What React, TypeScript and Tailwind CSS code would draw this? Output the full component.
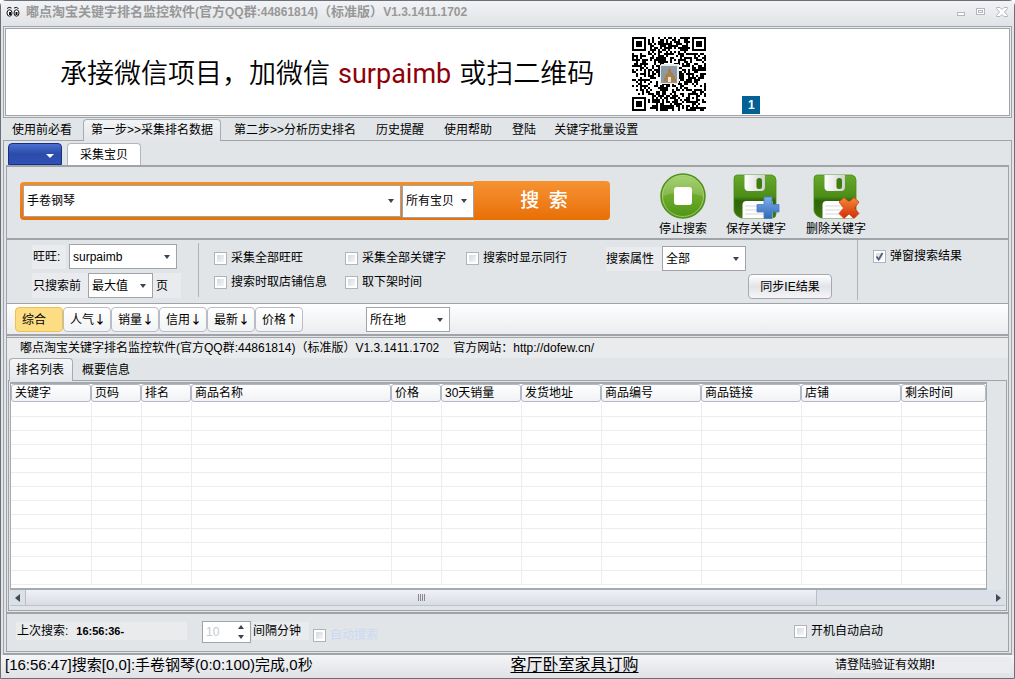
import { useState } from "react";

const menuTabs = [
  "使用前必看",
  "第一步>>采集排名数据",
  "第二步>>分析历史排名",
  "历史提醒",
  "使用帮助",
  "登陆",
  "关键字批量设置",
];

const sortTabs = [
  { name: "综合", arrow: "" },
  { name: "人气", arrow: "↓" },
  { name: "销量", arrow: "↓" },
  { name: "信用", arrow: "↓" },
  { name: "最新", arrow: "↓" },
  { name: "价格", arrow: "↑" },
];

const columns = [
  { name: "关键字", width: "w-[80px]" },
  { name: "页码", width: "w-[50px]" },
  { name: "排名", width: "w-[50px]" },
  { name: "商品名称", width: "w-[200px]" },
  { name: "价格", width: "w-[50px]" },
  { name: "30天销量", width: "w-[80px]" },
  { name: "发货地址", width: "w-[80px]" },
  { name: "商品编号", width: "w-[100px]" },
  { name: "商品链接", width: "w-[100px]" },
  { name: "店铺", width: "w-[100px]" },
  { name: "剩余时间", width: "" },
];

const QR_SIZE = 37;

function isFinder(x: number, y: number) {
  const corners = [
    [0, 0],
    [QR_SIZE - 7, 0],
    [0, QR_SIZE - 7],
  ];
  for (const [cx, cy] of corners) {
    const dx = x - cx;
    const dy = y - cy;
    if (dx >= -1 && dx <= 7 && dy >= -1 && dy <= 7) {
      const ring = Math.max(Math.abs(dx - 3), Math.abs(dy - 3));
      return ring === 3 || ring <= 1 ? 1 : 0;
    }
  }
  const ring = Math.max(Math.abs(x - 30), Math.abs(y - 30));
  if (ring <= 2) return ring === 1 ? 0 : 1;
  return -1;
}

function noise(n: number) {
  let h = Math.imul(n ^ 0x9e3779b9, 0x85ebca6b);
  h = Math.imul(h ^ (h >>> 13), 0xc2b2ae35);
  return ((h ^ (h >>> 16)) >>> 0) / 4294967296;
}

function qrPath() {
  let d = "";
  for (let y = 0; y < QR_SIZE; y++) {
    for (let x = 0; x < QR_SIZE; x++) {
      const fixed = isFinder(x, y);
      const dark = fixed === -1 ? noise(y * QR_SIZE + x + 1) > 0.48 : fixed === 1;
      if (dark) d += `M${x} ${y}h1v1h-1z`;
    }
  }
  return d;
}

function QrCode() {
  return (
    <svg viewBox="0 0 37 37" className="h-[74px] w-[74px]" shapeRendering="crispEdges" aria-label="二维码">
      <path d={qrPath()} fill="#000" />
      <rect x="14" y="13.500" width="9.500" height="10" rx="1" fill="#e9ece9" />
      <rect x="14.500" y="14.500" width="8" height="8.500" fill="#8c9aa6" />
      <path d="M16 22.500c0-3 1-4 2-5v-1.500c1-1 2 0 1.500 1.500 1.500 1 2.500 3 2.500 5z" fill="#a9814e" />
      <path d="M18 20h1.500v2.500h-1.500z" fill="#eee2cf" />
    </svg>
  );
}

function EyesIcon() {
  return (
    <svg viewBox="0 0 14 12" className="h-3 w-[14px]">
      <g fill="#fff" stroke="#111" strokeWidth="1">
        <ellipse cx="3.500" cy="7" rx="2.500" ry="3.200" />
        <ellipse cx="10.500" cy="7" rx="2.500" ry="3.200" />
      </g>
      <path d="M3 6h2v3h-2zM9.500 6h2v3h-2z" fill="#111" />
      <path d="M1 2.500q2-2 4.500-.5M8 2q2.500-1.500 4.500.5" fill="none" stroke="#111" />
    </svg>
  );
}

function StopIcon() {
  return (
    <svg viewBox="0 0 46 46" className="h-[46px] w-[46px]">
      <defs>
        <linearGradient id="stop-fill" x1="0" y1="0" x2="0" y2="1">
          <stop offset="0" stopColor="#9ccd62" />
          <stop offset="0.5" stopColor="#6eab2b" />
          <stop offset="1" stopColor="#4e9417" />
        </linearGradient>
      </defs>
      <circle cx="23" cy="23" r="22" fill="url(#stop-fill)" stroke="#529020" strokeWidth="1.500" />
      <circle cx="23" cy="23" r="20.500" fill="none" stroke="#b5db86" strokeOpacity="0.7" />
      <path d="M2.500 24a20.500 20.500 0 0 1 41 0c-8-5-30-7-41 0z" fill="#fff" fillOpacity="0.15" />
      <rect x="14" y="14" width="18" height="18" rx="3" fill="#fff" />
    </svg>
  );
}

function DiskIcon({ kind }: { kind: "add" | "remove" }) {
  return (
    <svg viewBox="0 0 48 46" className="h-[46px] w-12">
      <defs>
        <linearGradient id={`disk-${kind}`} x1="0" y1="0" x2="0" y2="1">
          <stop offset="0" stopColor="#67a92b" />
          <stop offset="0.5" stopColor="#4c8d18" />
          <stop offset="0.6" stopColor="#2e6508" />
          <stop offset="1" stopColor="#3c760e" />
        </linearGradient>
        <linearGradient id={`slide-${kind}`} x1="0" y1="0" x2="1" y2="0">
          <stop offset="0" stopColor="#fff" />
          <stop offset="1" stopColor="#cfd2cf" />
        </linearGradient>
        <linearGradient id="plus-fill" x1="0" y1="0" x2="0" y2="1">
          <stop offset="0" stopColor="#7fb0ea" />
          <stop offset="1" stopColor="#2f68b8" />
        </linearGradient>
        <linearGradient id="cross-fill" x1="0" y1="0" x2="0" y2="1">
          <stop offset="0" stopColor="#f58a3c" />
          <stop offset="1" stopColor="#d02d06" />
        </linearGradient>
      </defs>
      <path
        d="M5 2h35q4 1 4 5v34q0 4-4 4H9Q2 42 2 37V6q0-4 3-4z"
        fill={`url(#disk-${kind})`}
        stroke="#4b8c17"
        strokeWidth="0.800"
      />
      <path d="M12.500 2h20.500v12q0 4-4 4h-12.500q-4 0-4-4z" fill={`url(#slide-${kind})`} />
      <rect x="24.500" y="5" width="5.500" height="11" rx="2.500" fill="#3e7b11" />
      <path d="M10.500 45V32q0-4 4-4h26v17z" fill="#fff" />
      <path d="M13 33h20M13 37h20M13 41h20" stroke="#d5d8d5" />
      {kind === "add" ? (
        <path
          d="M32 24h8v7.500h7v7.500h-7v6.500h-8v-6.500h-7v-7.500h7z"
          fill="url(#plus-fill)"
          stroke="#4a7cc3"
          strokeWidth="0.800"
        />
      ) : (
        <path
          d="M32 24.500l5 4.500 5-4.500 5 4.500-4.500 6 4.500 5.500-5 5-5-4.500-5 4.500-5-5 4.500-5.500-4.500-6z"
          fill="url(#cross-fill)"
          stroke="#d8420f"
          strokeWidth="0.800"
        />
      )}
    </svg>
  );
}

function Combo({ label, options, className }: { label: string; options: string[]; className: string }) {
  return (
    <div className={`relative shrink-0 border border-[#a0a3aa] bg-white ${className}`}>
      <select aria-label={label} className="h-full w-full appearance-none bg-transparent pr-5 pl-[3px] outline-none">
        {options.map((option) => (
          <option key={option}>{option}</option>
        ))}
      </select>
      <svg viewBox="0 0 6 4" className="pointer-events-none absolute top-1/2 right-[6px] -mt-[2px] h-1 w-[6px]">
        <path d="M0 0h6L3 4z" fill="#3a4350" />
      </svg>
    </div>
  );
}

function Check({ label, checked = false, disabled = false }: { label: string; checked?: boolean; disabled?: boolean }) {
  const [on, setOn] = useState(checked);
  return (
    <label className={`flex h-4 items-center gap-1 whitespace-nowrap ${disabled ? "text-[#cbd9f3]" : ""}`}>
      <span className="relative flex">
        <input
          type="checkbox"
          checked={on}
          disabled={disabled}
          onChange={() => setOn(!on)}
          className="size-[13px] appearance-none border border-[#b0b4ba] bg-linear-to-br from-[#cdd0d8] to-white shadow-[inset_0_0_0_2px_#fff]"
        />
        {on && (
          <svg viewBox="0 0 13 13" className="pointer-events-none absolute inset-0 size-[13px]">
            <path d="M3.500 6.500l2.200 3L9.500 3" fill="none" stroke="#4c6079" strokeWidth="1.800" />
          </svg>
        )}
      </span>
      {label}
    </label>
  );
}

function TitleBar() {
  return (
    <header className="flex h-[25px] items-center justify-between bg-linear-to-b from-[#f2f3f6] to-[#e0e3e7] pr-[6px] pb-[3px] pl-[5px]">
      <div className="flex items-center gap-[6px]">
        <EyesIcon />
        <h1 className="text-[13px] leading-4 font-bold whitespace-nowrap text-[#989898]">
          嘟点淘宝关键字排名监控软件<span className="text-xs">(</span>官方<span className="text-xs">QQ</span>群
          <span className="text-xs">:44861814)</span>（标准版）<span className="text-xs">V1.3.1411.1702</span>
        </h1>
      </div>
      <div className="flex items-center gap-[10px]">
        <button aria-label="最小化" className="flex h-3 w-[10px] items-center">
          <svg viewBox="0 0 10 12" className="h-3 w-[10px]" fill="#fff" stroke="#b3b6bc">
            <rect x="1.500" y="6.500" width="7" height="3" />
          </svg>
        </button>
        <button aria-label="最大化" className="flex h-3 w-[10px] items-center">
          <svg viewBox="0 0 10 12" className="h-3 w-[10px]" fill="#fff" stroke="#b3b6bc">
            <rect x="0.500" y="2.500" width="8" height="6" />
            <rect x="2.500" y="4.500" width="4" height="2" />
          </svg>
        </button>
        <button aria-label="关闭" className="flex h-3 w-3 items-center">
          <svg viewBox="0 0 12 12" className="size-3" fill="#fff" stroke="#b3b6bc">
            <path d="M.5 1.500h3.500l2 2 2-2h3.500v1l-3 3.500 3 3.500v1h-3.500l-2-2-2 2h-3.500v-1l3-3.500-3-3.500z" />
          </svg>
        </button>
      </div>
    </header>
  );
}

function Banner() {
  return (
    <section className="mx-[2px] border border-[#a0a3a8] bg-[#e8eaee] p-px">
      <div className="flex h-[88px] items-center border border-[#a0a3a8] bg-white pl-[54px]">
        <p className="flex items-center pt-[6px] text-[27px] font-[350] whitespace-nowrap">
          承接微信项目，加微信
          <span className="mx-2 font-['Roboto'] font-normal text-[#8f0008]">surpaimb</span>
          或扫二维码
        </p>
        <div className="ml-[38px] pt-[3px]">
          <QrCode />
        </div>
        <button className="mr-auto mb-px ml-9 h-[18px] w-[18px] self-end bg-[#046195] text-xs leading-[18px] font-bold text-white">
          1
        </button>
      </div>
    </section>
  );
}

function SearchPanel() {
  return (
    <section className="flex h-[73px] items-start border-b-2 border-[#a0a3a8] pt-[6px] pl-[13px]">
      <div className="mt-2 flex items-end">
        <div className="flex h-[38px] items-center rounded-l-sm bg-linear-to-b from-[#f48d23] to-[#ea7104] py-[3px] pl-[3px]">
          <Combo label="关键字" options={["手卷钢琴"]} className="h-8 w-[378px]" />
          <Combo label="搜索范围" options={["所有宝贝"]} className="ml-px h-[33px] w-[72px]" />
        </div>
        <button className="h-[39px] w-[136px] rounded-r-sm bg-linear-to-b from-[#f69230] to-[#e86f01] pl-1 text-[19px] font-medium text-white">
          搜&ensp;索
        </button>
      </div>
      <div className="ml-[50px] flex">
        <button className="-ml-px flex w-12 flex-col items-center whitespace-nowrap">
          <StopIcon />
          <span className="mt-[2px] leading-4">停止搜索</span>
        </button>
        <button className="ml-[19px] flex w-[60px] flex-col items-center">
          <DiskIcon kind="add" />
          <span className="mt-[2px] leading-4">保存关键字</span>
        </button>
        <button className="ml-5 flex w-[60px] flex-col items-center">
          <DiskIcon kind="remove" />
          <span className="mt-[2px] leading-4">删除关键字</span>
        </button>
      </div>
    </section>
  );
}

function FilterPanel() {
  return (
    <section className="flex h-[64px] items-start border-b border-[#a0a3a8] pl-[25px]">
      <div className="mt-1 flex w-[149px] flex-col gap-1">
        <div className="flex items-center gap-[3px]">
          <span className="h-6 w-[34px] bg-[#e9ebee] pl-px leading-6">旺旺:</span>
          <Combo label="旺旺" options={["surpaimb"]} className="h-[25px] w-[108px]" />
        </div>
        <div className="flex items-center bg-[#e9ebee] pl-px">
          <span className="w-[55px]">只搜索前</span>
          <Combo label="页数" options={["最大值"]} className="h-[25px] w-[65px]" />
          <span className="ml-[3px]">页</span>
        </div>
      </div>
      <div className="mt-[3px] ml-[17px] h-[54px] border-r border-[#b0b4ba]" />
      <div className="mt-[10px] ml-[15px] grid grid-cols-[131px_121px_140px] gap-y-2">
        <Check label="采集全部旺旺" />
        <Check label="采集全部关键字" />
        <Check label="搜索时显示同行" />
        <Check label="搜索时取店铺信息" />
        <Check label="取下架时间" />
      </div>
      <div className="mt-[6px] flex w-[227px] flex-col gap-[3px]">
        <div className="flex items-center">
          <span className="h-6 w-14 bg-[#e9ebee] leading-6">搜索属性</span>
          <Combo label="搜索属性" options={["全部"]} className="h-[25px] w-[84px]" />
        </div>
        <button className="ml-[142px] h-[25px] w-[84px] rounded-sm border border-[#a6a9af] bg-linear-to-b from-white via-[#e3e4e8] to-[#f6f6f8]">
          同步IE结果
        </button>
      </div>
      <div className="ml-6 h-[60px] border-r border-[#b0b4ba]" />
      <div className="mt-2 ml-[15px]">
        <Check label="弹窗搜索结果" checked />
      </div>
    </section>
  );
}

function SortBar() {
  const [active, setActive] = useState("综合");
  return (
    <nav className="flex h-8 items-start gap-[63px] border-b-2 border-[#a0a3a8] bg-linear-to-b from-white to-[#eaecef] pt-[3px] pl-2">
      <div className="flex">
        {sortTabs.map((tab) => (
          <button
            key={tab.name}
            onClick={() => setActive(tab.name)}
            className={`h-[25px] w-12 rounded-sm border pb-px pl-[6px] text-left whitespace-nowrap ${
              tab.name === active
                ? "border-[#f0bf52] bg-[#fcdd84]"
                : "border-[#b9bdc6] bg-linear-to-b from-white to-[#f2f3f5]"
            }`}
          >
            {tab.name}
            <span className="font-['Noto_Sans_CJK_SC'] leading-4 font-medium">{tab.arrow}</span>
          </button>
        ))}
      </div>
      <Combo label="所在地" options={["所在地"]} className="h-[25px] w-[84px]" />
    </nav>
  );
}

function ResultTable() {
  return (
    <div className="mr-[19px] flex-1 overflow-hidden border-x border-y-2 border-[#a5a9b0] bg-white">
      <table className="w-full table-fixed border-collapse">
        <thead>
          <tr>
            {columns.map((column) => (
              <th key={column.name} className={`p-0 text-left font-normal ${column.width}`}>
                <div className="h-[18px] overflow-hidden rounded-[3px] border border-[#b3b9c4] bg-linear-to-b from-white to-[#f1f2f5] pl-[3px] leading-4 whitespace-nowrap">
                  {column.name}
                </div>
              </th>
            ))}
          </tr>
        </thead>
        <tbody>
          {Array.from({ length: 13 }, (_, row) => (
            <tr key={row} className="h-[14px]">
              {columns.map((column) => (
                <td key={column.name} className="border-r border-b border-[#ededf0] p-0 last:border-r-0" />
              ))}
            </tr>
          ))}
        </tbody>
      </table>
    </div>
  );
}

function ScrollBar() {
  return (
    <div className="mr-px flex h-4 border-b border-[#bcc2ca] bg-[#dae0e7]">
      <button aria-label="向左" className="flex w-[15px] items-center justify-center">
        <svg viewBox="0 0 5 8" className="h-2 w-[5px]">
          <path d="M5 0v8L0 4z" fill="#444a52" />
        </svg>
      </button>
      <div className="flex-1">
        <div className="flex h-full w-[82%] items-center justify-center gap-px border-x border-[#b9bec6] bg-linear-to-b from-[#f0f2f7] to-[#d9dce3]">
          <span className="h-[7px] w-px bg-[#888]" />
          <span className="h-[7px] w-px bg-[#888]" />
          <span className="h-[7px] w-px bg-[#888]" />
          <span className="h-[7px] w-px bg-[#888]" />
        </div>
      </div>
      <button aria-label="向右" className="flex w-[14px] items-center justify-center">
        <svg viewBox="0 0 5 8" className="h-2 w-[5px]">
          <path d="M0 0v8l5-4z" fill="#444a52" />
        </svg>
      </button>
    </div>
  );
}

function ResultPanel() {
  return (
    <section className="mt-px flex flex-1 flex-col border-t border-[#a0a3a8]">
      <p className="h-5 bg-[#e9ebed] pl-[13px] leading-5">
        嘟点淘宝关键字排名监控软件(官方QQ群:44861814)（标准版）V1.3.1411.1702
        <span className="ml-[14px]">
          官方网站：<a href="http://dofew.cn/">http://dofew.cn/</a>
        </span>
      </p>
      <div className="flex h-[22px] pl-[2px]">
        <button className="z-10 -mb-px w-16 rounded-t-sm border border-b-0 border-[#a8acb2] bg-linear-to-b from-[#f6f7f8] to-[#e6e8ec] pr-[2px]">
          排名列表
        </button>
        <button className="px-[9px] pt-px">概要信息</button>
      </div>
      <div className="mx-px flex flex-1 flex-col border border-[#a0a3a8] pt-px pb-[4px] pl-px">
        <ResultTable />
        <ScrollBar />
      </div>
    </section>
  );
}

function SchedulePanel() {
  return (
    <section className="mt-px flex h-[40px] items-start border-y border-t-2 border-[#a0a3a8] pl-[9px]">
      <div className="mt-2 flex h-[18px] w-[171px] items-center bg-[#e9ebed] pl-px">
        上次搜索:
        <b className="ml-2 text-[11px]">16:56:36-</b>
      </div>
      <div className="mt-[7px] ml-[15px] flex h-[22px] w-[49px] border border-[#a0a3aa] bg-white">
        <input aria-label="间隔分钟" defaultValue="10" disabled className="w-[35px] min-w-0 pl-[3px] text-[#c4c8cf]" />
        <div className="flex flex-col items-center justify-center gap-[6px]">
          <button aria-label="增加" className="flex">
            <svg viewBox="0 0 6 4" className="h-1 w-[6px]">
              <path d="M0 4h6L3 0z" fill="#3a4350" />
            </svg>
          </button>
          <button aria-label="减少" className="flex">
            <svg viewBox="0 0 6 4" className="h-1 w-[6px]">
              <path d="M0 0h6L3 4z" fill="#3a4350" />
            </svg>
          </button>
        </div>
      </div>
      <span className="mt-2 ml-px h-[18px] w-[57px] bg-[#e9ebed] pl-px leading-[18px]">间隔分钟</span>
      <div className="mt-[13px] ml-1">
        <Check label="自动搜索" disabled />
      </div>
      <div className="mt-[9px] mr-[125px] ml-auto">
        <Check label="开机自动启动" />
      </div>
    </section>
  );
}

export default function App() {
  const [menu, setMenu] = useState(menuTabs[1]);

  return (
    <div className="flex min-h-screen flex-col rounded-t-md border border-[#6b6f76] bg-[#e1e5e8] font-['Liberation_Sans','Noto_Sans_CJK_SC',sans-serif] text-xs text-black">
      <TitleBar />
      <Banner />
      <div className="mx-[2px] flex h-[23px] border-b border-[#a0a3a8]">
        {menuTabs.map((tab) => (
          <button
            key={tab}
            onClick={() => setMenu(tab)}
            className={`h-[22px] whitespace-nowrap ${
              tab === menu
                ? "mt-px mr-[3px] ml-px rounded-t-sm border border-b-0 border-[#a8acb2] bg-linear-to-b from-[#f3f4f6] to-[#e3e5e9] px-[7px] pb-[2px] first:ml-0"
                : "px-[10px] pt-[2px] first:pl-[9px] last:pl-2"
            }`}
          >
            {tab}
          </button>
        ))}
      </div>

      <main className="mx-[2px] flex flex-1 flex-col border-x border-b-2 border-[#a0a3a8] px-[2px] pb-px">
        <div className="flex h-[24px] items-end gap-[5px] pl-[2px]">
          <button
            aria-label="菜单"
            className="flex h-[22px] w-[54px] items-center justify-end rounded-t-sm border border-[#16307d] bg-linear-to-b from-[#4b70d2] via-[#2c4ba9] to-[#2f52b8] pt-1 pr-[7px]"
          >
            <svg viewBox="0 0 8 4" className="h-1 w-2">
              <path d="M0 0h8L4 4z" fill="#fff" />
            </svg>
          </button>
          <button className="h-[22px] w-[74px] rounded-t-sm border border-b-0 border-[#b2b6bc] bg-white">采集宝贝</button>
        </div>
        <div className="flex flex-1 flex-col border border-t-2 border-b-0 border-[#a0a3a8]">
          <SearchPanel />
          <FilterPanel />
          <SortBar />
          <ResultPanel />
          <SchedulePanel />
        </div>
      </main>

      <footer className="grid h-[23px] grid-cols-[1fr_auto_1fr] items-center bg-linear-to-b from-[#f4f5f7] to-[#dfe2e6] pb-[3px] pl-1">
        <span className="text-[15px] leading-5 whitespace-nowrap">[16:56:47]搜索[0,0]:手卷钢琴(0:0:100)完成,0秒</span>
        <a href="#" className="ml-[130px] text-base leading-5 underline underline-offset-2">
          客厅卧室家具订购
        </a>
        <span className="mr-[3px] w-[176px] justify-self-end bg-[#eaecef]">
          请登陆验证有效期<b>!</b>
        </span>
      </footer>
    </div>
  );
}
